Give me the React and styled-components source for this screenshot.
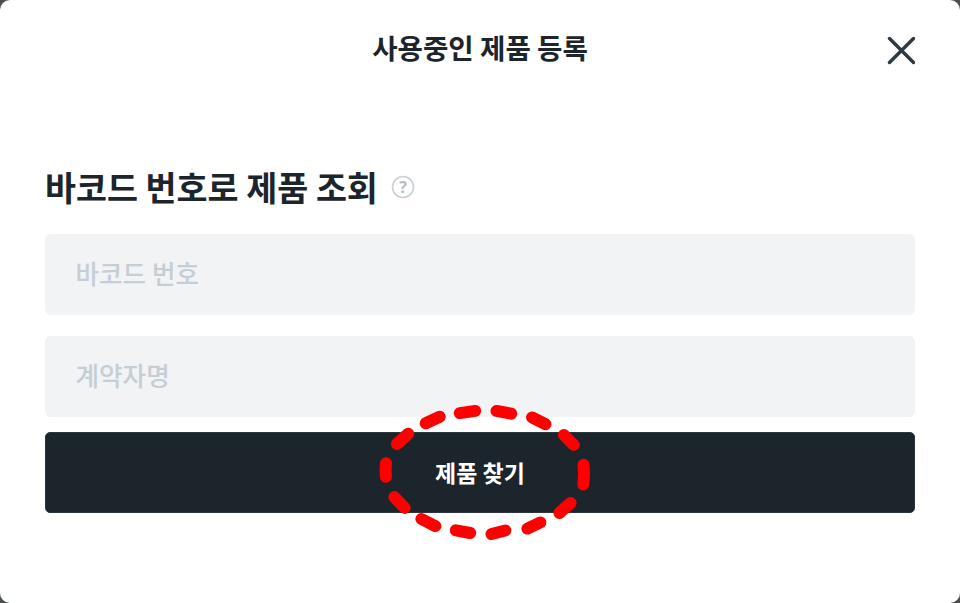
import React from 'react';
import styled, { createGlobalStyle } from 'styled-components';

const GlobalStyle = createGlobalStyle`
  html, body {
    margin: 0;
    height: 100%;
    background: #4b4f52;
  }
  #root {
    height: 100%;
  }
  * {
    box-sizing: border-box;
  }
`;

const Modal = styled.div`
  position: relative;
  height: 603px;
  padding: 0 45px;
  background: #fff;
  border-radius: 10px;
  font-family: "Noto Sans CJK KR", "Noto Sans", sans-serif;
  color: #1c252b;
  overflow: hidden;
`;

const Header = styled.header`
  display: grid;
  grid-template-columns: 1fr auto 1fr;
  align-items: center;
  height: 96px;
`;

const Title = styled.h1`
  grid-column: 2;
  margin: 0;
  padding-bottom: 2px;
  font-size: 27.6px;
  font-weight: 700;
  line-height: 92px;
`;

const CloseButton = styled.button`
  grid-column: 3;
  justify-self: end;
  display: flex;
  padding: 4px 0 0;
  border: 0;
  background: none;
  color: #2d3a40;
`;

const Heading = styled.div`
  display: flex;
  align-items: center;
  gap: 13px;
  margin-top: 66px;
  height: 50px;
`;

const HeadingText = styled.h2`
  margin: 0;
  font-size: 33.7px;
  font-weight: 700;
  line-height: 50px;
`;

const Form = styled.form`
  display: flex;
  flex-direction: column;
  margin-top: 22px;
`;

const Field = styled.input`
  display: block;
  width: 100%;
  height: 81px;
  margin-bottom: ${props => props.$gap}px;
  padding: 0 30px 4px 30.5px;
  border: 0;
  outline: 0;
  border-radius: 6px;
  background: #f1f3f5;
  font: 500 25.6px "Noto Sans CJK KR", "Noto Sans", sans-serif;
  color: #1c252b;

  &::placeholder {
    color: #c5ced4;
    opacity: 1;
  }
`;

const SubmitButton = styled.button`
  height: 81px;
  padding: 0 0 2px;
  border: 1px solid #2a363c;
  border-radius: 5px;
  background: #1c252b;
  color: #fff;
  font: 700 23px "Noto Sans CJK KR", "Noto Sans", sans-serif;
`;

const Annotation = styled.svg`
  position: absolute;
  top: 0;
  left: 0;
  pointer-events: none;
`;

const dashes = [
  'M459.8 413.1L475.2 410.9',
  'M496.5 410.9L511.2 413.7',
  'M532 417.4L545.4 424.2',
  'M563.9 435L573.9 444.9',
  'M583.5 464.7Q584.6 475 583.3 484.5',
  'M570.6 502.9L559.4 513',
  'M540.4 522.4L527.4 528.6',
  'M505.3 530.5L491.5 534',
  'M470.2 533L455.8 530.3',
  'M435.4 526.1L421.4 519',
  'M404.7 507.9L394.4 497.1',
  'M385.9 476.8Q385.2 470 386 463.2',
  'M396.9 444L408.2 433.7',
  'M425.7 423.3L439.7 416.7',
];

const App = () => (
  <>
    <GlobalStyle />
    <Modal>
      <Header>
        <Title>사용중인 제품 등록</Title>
        <CloseButton type="button" aria-label="닫기">
          <svg width="30" height="30" viewBox="0 0 30 30" fill="none" stroke="currentColor" strokeWidth="3.4" strokeLinecap="round">
            <path d="M4.5 3.5L28.5 27.5M28.5 3.5L4.5 27.5" />
          </svg>
        </CloseButton>
      </Header>
      <Heading>
        <HeadingText>바코드 번호로 제품 조회</HeadingText>
        <svg width="24" height="24" viewBox="0 0 24 24" fill="none">
          <circle cx="12" cy="12" r="10.5" stroke="#c9d1d6" strokeWidth="1.6" />
          <text x="12" y="17.5" textAnchor="middle" fontSize="16" fontWeight="700" fill="#b4bdc3" fontFamily="Noto Sans, sans-serif">?</text>
        </svg>
      </Heading>
      <Form>
        <Field $gap={21} placeholder="바코드 번호" />
        <Field $gap={15} placeholder="계약자명" />
        <SubmitButton type="button">제품 찾기</SubmitButton>
      </Form>
      <Annotation width="960" height="603" viewBox="0 0 960 603" fill="none" stroke="#ff0000" strokeWidth="12" strokeLinecap="round">
        {dashes.map(d => <path key={d} d={d} />)}
      </Annotation>
    </Modal>
  </>
);

export default App;
